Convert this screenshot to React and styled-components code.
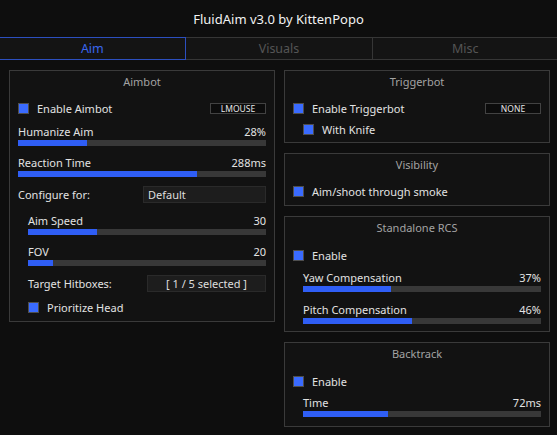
import React from "react";
import styled, { createGlobalStyle } from "styled-components";

const GlobalStyle = createGlobalStyle`
    html, body {
        margin: 0;
        padding: 0;
        background: #0e0e0e;
    }
    body {
        font-family: "Noto Sans", "Open Sans", sans-serif;
        color: #dcdcdc;
    }
`;

const Window = styled.div`
    width: 557px;
    height: 435px;
    background: #0e0e0e;
    overflow: hidden;
`;

const Header = styled.div`
    height: 37px;
    display: flex;
    align-items: center;
    justify-content: center;
    font-size: 13px;
    color: #f2f2f2;
`;

const TabBar = styled.div`
    display: flex;
    height: 23px;
`;

const Tab = styled.div`
    flex: ${(p) => p.$w};
    display: flex;
    align-items: center;
    justify-content: center;
    box-sizing: border-box;
    background: #141414;
    border: 1px solid ${(p) => (p.$active ? "#2c4fbf" : "#363636")};
    border-left: ${(p) => (p.$first ? "none" : undefined)};
    border-right: ${(p) => (p.$last ? "none" : undefined)};
    color: ${(p) => (p.$active ? "#3a67ee" : "#555555")};
    font-size: 12.5px;
    margin-left: ${(p) => (p.$first ? "0" : "-1px")};
    z-index: ${(p) => (p.$active ? 1 : 0)};
`;

const Content = styled.div`
    display: flex;
    gap: 9px;
    padding: 10px 0 0 9px;
`;

const Column = styled.div`
    width: ${(p) => p.$w}px;
    display: flex;
    flex-direction: column;
    gap: ${(p) => p.$gap || 0}px;
`;

const Panel = styled.div`
    box-sizing: border-box;
    border: 1px solid #3a3a3a;
    background: #121212;
    padding: 0 8px ${(p) => p.$pb}px 8px;
    display: flex;
    flex-direction: column;
`;

const PanelTitle = styled.div`
    padding-top: 3px;
    line-height: 16px;
    text-align: center;
    font-size: 11px;
    color: #a3a3a3;
`;

const CheckRow = styled.div`
    display: flex;
    align-items: center;
    height: 16px;
    margin-top: ${(p) => p.$mt || 0}px;
    padding-left: ${(p) => p.$indent || 0}px;
    font-size: 11px;
    color: #e2e2e2;
`;

const Box = styled.span`
    width: 11px;
    height: 11px;
    box-sizing: border-box;
    border: 1px solid #4e4e4e;
    background: #3a6bff;
    margin-right: 8px;
    flex-shrink: 0;
`;

const KeyButton = styled.span`
    margin-left: auto;
    width: 56px;
    height: 11px;
    box-sizing: border-box;
    border: 1px solid #424242;
    background: #0c0c0c;
    color: #e6e6e6;
    font-size: 8.5px;
    line-height: 9px;
    text-align: center;
`;

const SliderWrap = styled.div`
    margin-top: ${(p) => p.$mt || 0}px;
    padding-left: ${(p) => p.$indent || 0}px;
`;

const SliderHead = styled.div`
    display: flex;
    justify-content: space-between;
    line-height: 15px;
    font-size: 11px;
    color: #e2e2e2;
`;

const Track = styled.div`
    margin-top: 1px;
    height: 6px;
    background: #383838;
`;

const Fill = styled.div`
    height: 100%;
    background: #2f5ef5;
`;

const FieldRow = styled.div`
    display: flex;
    align-items: center;
    justify-content: space-between;
    margin-top: ${(p) => p.$mt || 0}px;
    padding-left: ${(p) => p.$indent || 0}px;
    font-size: 11px;
    color: #e2e2e2;
`;

const Field = styled.div`
    width: ${(p) => p.$w}px;
    height: 17px;
    box-sizing: border-box;
    background: #1d1d1d;
    border: 1px solid #2a2a2a;
    display: flex;
    align-items: center;
    justify-content: ${(p) => (p.$center ? "center" : "flex-start")};
    padding-left: ${(p) => (p.$center ? 0 : 4)}px;
    font-size: 11px;
    color: #dedede;
`;

const Slider = ({ label, value, pct, mt, indent }) => (
    <SliderWrap $mt={mt} $indent={indent}>
        <SliderHead>
            <span>{label}</span>
            <span>{value}</span>
        </SliderHead>
        <Track>
            <Fill style={{ width: `${pct}%` }} />
        </Track>
    </SliderWrap>
);

const Check = ({ label, mt, indent, keyName }) => (
    <CheckRow $mt={mt} $indent={indent}>
        <Box />
        {label}
        {keyName && <KeyButton>{keyName}</KeyButton>}
    </CheckRow>
);

export default function App() {
    return (
        <Window>
            <GlobalStyle />
            <Header>FluidAim v3.0 by KittenPopo</Header>
            <TabBar>
                <Tab $w={186} $active $first>Aim</Tab>
                <Tab $w={188}>Visuals</Tab>
                <Tab $w={185} $last>Misc</Tab>
            </TabBar>
            <Content>
                <Column $w={266}>
                    <Panel $pb={6}>
                        <PanelTitle>Aimbot</PanelTitle>
                        <Check label="Enable Aimbot" mt={10} keyName="LMOUSE" />
                        <Slider label="Humanize Aim" value="28%" pct={28} mt={8} />
                        <Slider label="Reaction Time" value="288ms" pct={72} mt={9} />
                        <FieldRow $mt={9}>
                            <span>Configure for:</span>
                            <Field $w={123}>Default</Field>
                        </FieldRow>
                        <Slider label="Aim Speed" value="30" pct={29} mt={10} indent={10} />
                        <Slider label="FOV" value="20" pct={10.5} mt={9} indent={10} />
                        <FieldRow $mt={9} $indent={10}>
                            <span>Target Hitboxes:</span>
                            <Field $w={119} $center>[ 1 / 5 selected ]</Field>
                        </FieldRow>
                        <Check label="Prioritize Head" mt={7} indent={10} />
                    </Panel>
                </Column>
                <Column $w={266} $gap={10}>
                    <Panel $pb={5}>
                        <PanelTitle>Triggerbot</PanelTitle>
                        <Check label="Enable Triggerbot" mt={10} keyName="NONE" />
                        <Check label="With Knife" mt={5} indent={10} />
                    </Panel>
                    <Panel $pb={6}>
                        <PanelTitle>Visibility</PanelTitle>
                        <Check label="Aim/shoot through smoke" mt={10} />
                    </Panel>
                    <Panel $pb={7}>
                        <PanelTitle>Standalone RCS</PanelTitle>
                        <Check label="Enable" mt={11} />
                        <Slider label="Yaw Compensation" value="37%" pct={37} mt={7} indent={10} />
                        <Slider label="Pitch Compensation" value="46%" pct={46} mt={10} indent={10} />
                    </Panel>
                    <Panel $pb={9}>
                        <PanelTitle>Backtrack</PanelTitle>
                        <Check label="Enable" mt={11} />
                        <Slider label="Time" value="72ms" pct={35.7} mt={6} indent={10} />
                    </Panel>
                </Column>
            </Content>
        </Window>
    );
}
